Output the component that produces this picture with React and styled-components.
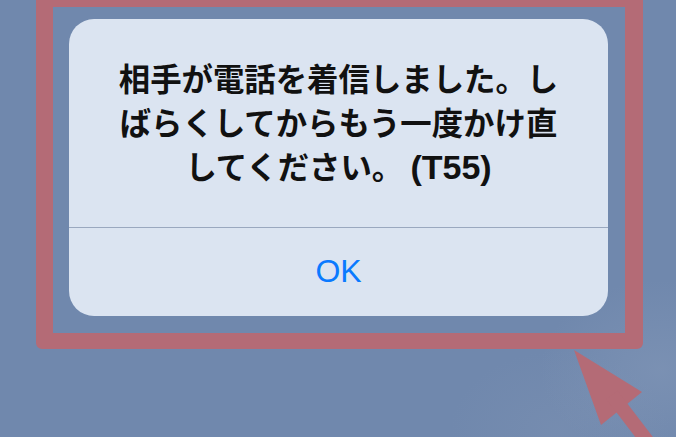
import React from "react";
import styled, { createGlobalStyle } from "styled-components";

const GlobalStyle = createGlobalStyle`
  html, body {
    margin: 0;
    padding: 0;
    height: 437px;
    overflow: hidden;
    background: #7088ad;
  }
  #root {
    height: 437px;
  }
`;

const Screen = styled.div`
  position: relative;
  width: 676px;
  height: 437px;
  overflow: hidden;
  background:
    radial-gradient(ellipse 120px 90px at 660px 370px, rgba(135, 155, 186, 0.45), rgba(135, 155, 186, 0) 100%),
    radial-gradient(ellipse 110px 80px at 560px 430px, rgba(128, 148, 180, 0.35), rgba(128, 148, 180, 0) 100%),
    #7088ad;
  font-family: "Liberation Sans", "Noto Sans CJK JP", sans-serif;
`;

const Frame = styled.div`
  box-sizing: border-box;
  width: 607px;
  margin: -10px 0 0 36px;
  border: 17px solid #b46b76;
  border-right-width: 18px;
  border-bottom-width: 16px;
  border-radius: 6px;
  padding: 12px 17px 17px 16px;
`;

const Alert = styled.div`
  display: flex;
  flex-direction: column;
  height: 297px;
  background: #dbe4f1;
  border-radius: 25px;
  overflow: hidden;
`;

const Message = styled.div`
  box-sizing: border-box;
  height: 208px;
  padding: 37px 40px 0;
  text-align: center;
  font-family: "Noto Sans CJK JP", sans-serif;
  font-weight: 700;
  font-size: 31.4px;
  line-height: 44px;
  color: #111;
`;

const Code = styled.span`
  font-family: "Liberation Sans", Arial, sans-serif;
  font-size: 34px;
  line-height: 40px;
`;

const Divider = styled.div`
  height: 1px;
  background: #9aa8bf;
`;

const Button = styled.div`
  flex: 1;
  display: flex;
  align-items: center;
  justify-content: center;
  padding-bottom: 1px;
  font-family: "Liberation Sans", Arial, sans-serif;
  font-size: 32px;
  color: #0a7aff;
`;

const Arrow = styled.svg`
  position: absolute;
  left: 0;
  top: 0;
  pointer-events: none;
`;

export default function App() {
  return (
    <>
      <GlobalStyle />
      <Screen>
        <Frame>
          <Alert>
            <Message>
              相手が電話を着信しました。しばらくしてからもう一度かけ直してください。 <Code>(T55)</Code>
            </Message>
            <Divider />
            <Button>OK</Button>
          </Alert>
        </Frame>
        <Arrow width="676" height="437" viewBox="0 0 676 437">
          <polygon points="574,350 642,392 601,425" fill="#b46b76" />
          <line x1="612" y1="395" x2="680" y2="484" stroke="#b46b76" strokeWidth="14" />
        </Arrow>
      </Screen>
    </>
  );
}
